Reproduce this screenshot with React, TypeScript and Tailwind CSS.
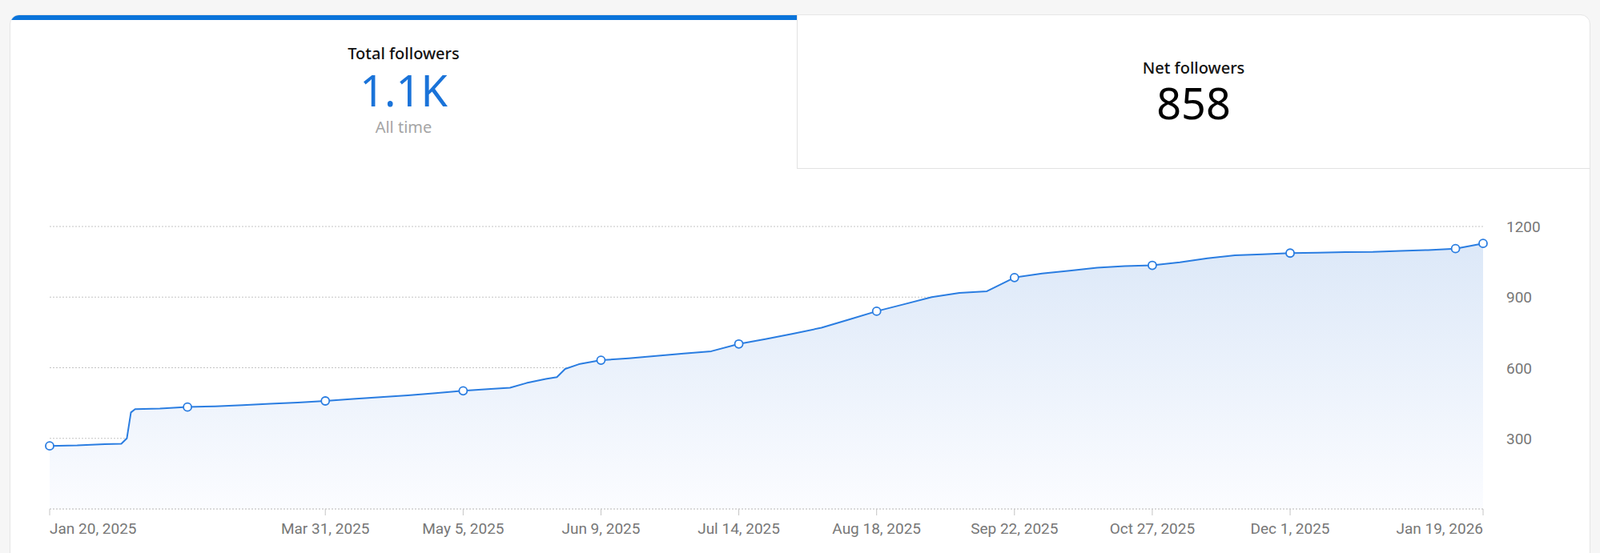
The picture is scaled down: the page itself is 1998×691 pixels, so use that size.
import React from "react";

// [week, followers]
const data: [number, number][] = [
  [0, 268], [1, 270], [2, 275], [2.6, 277], [2.8, 300], [2.95, 410], [3.1, 424], [4, 427],
  [5, 433], [6, 436], [7, 441], [8, 447], [9, 452], [10, 459], [11, 467], [12, 475],
  [13, 483], [14, 492], [15, 502], [16, 510], [16.7, 515], [17.3, 535], [18, 552], [18.4, 560],
  [18.7, 595], [19.2, 615], [20, 632], [21, 640], [22, 650], [23, 660], [24, 670], [25, 701],
  [26, 722], [27, 745], [28, 770], [29, 805], [30, 840], [31, 870], [32, 900], [33, 918],
  [34, 925], [35, 983], [36, 1000], [37, 1012], [38, 1025], [39, 1032], [40, 1035],
  [41, 1048], [42, 1065], [43, 1078], [44, 1082], [45, 1087], [46, 1089], [47, 1091],
  [48, 1092], [49, 1096], [50, 1100], [51, 1106], [52, 1128],
];

const dots = [0, 5, 10, 15, 20, 25, 30, 35, 40, 45, 51, 52];
const ticks: [number, string, "start" | "middle" | "end"][] = [
  [0, "Jan 20, 2025", "start"],
  [10, "Mar 31, 2025", "middle"],
  [15, "May 5, 2025", "middle"],
  [20, "Jun 9, 2025", "middle"],
  [25, "Jul 14, 2025", "middle"],
  [30, "Aug 18, 2025", "middle"],
  [35, "Sep 22, 2025", "middle"],
  [40, "Oct 27, 2025", "middle"],
  [45, "Dec 1, 2025", "middle"],
  [52, "Jan 19, 2026", "end"],
];

const X0 = 49;
const X1 = 1839;
const Y0 = 425;
const Y1200 = 72;
const sx = (w: number) => X0 + ((X1 - X0) * w) / 52;
const sy = (v: number) => Y0 - ((Y0 - Y1200) * v) / 1200;
const valAt = (w: number) => data.find((d) => d[0] === w)![1];

const Chart = () => {
  const line = data.map((d, i) => `${i ? "L" : "M"}${sx(d[0]).toFixed(1)},${sy(d[1]).toFixed(1)}`).join(" ");
  const area = `${line} L${X1},${Y0} L${X0},${Y0} Z`;
  return (
    <svg width="1966" height="481" viewBox="0 0 1966 481" className="block">
      <defs>
        <linearGradient id="fill" x1="0" y1="0" x2="0" y2="1">
          <stop offset="0%" stopColor="#dce8f8" />
          <stop offset="100%" stopColor="#fbfcff" />
        </linearGradient>
      </defs>
      {[1200, 900, 600, 300].map((v) => (
        <g key={v}>
          <line x1={X0} x2={X1} y1={sy(v)} y2={sy(v)} stroke="#c4c4c4" strokeDasharray="2 2" />
          <text x={1868} y={sy(v) + 7} fontSize="19" fill="#777" fontFamily="Roboto, sans-serif">{v}</text>
        </g>
      ))}
      <path d={area} fill="url(#fill)" />
      <line x1={X0} x2={X1} y1={Y0} y2={Y0} stroke="#b5b5b5" strokeDasharray="2 2" />
      <path d={line} fill="none" stroke="#2a7de1" strokeWidth="2" strokeLinejoin="round" />
      {dots.map((w) => (
        <circle key={w} cx={sx(w)} cy={sy(valAt(w))} r="5" fill="#fff" stroke="#2a7de1" strokeWidth="1.8" />
      ))}
      {ticks.map(([w, label, anchor]) => (
        <g key={label}>
          <line x1={sx(w)} x2={sx(w)} y1={Y0} y2={Y0 + 8} stroke="#c4c4c4" />
          <text x={sx(w)} y={456} textAnchor={anchor} fontSize="19" fill="#777" fontFamily="Roboto, sans-serif">
            {label}
          </text>
        </g>
      ))}
    </svg>
  );
};

export default function App() {
  return (
    <div className="min-h-[691px] bg-[#f6f6f6] pt-[18px] px-[12px] font-['Roboto',sans-serif]">
      <div className="bg-white rounded-t-[12px] border border-[#e6e6e6] overflow-hidden">
        <div className="flex">
          <div className="w-[982px] border-t-[6px] border-[#0a74da] h-[192px] flex flex-col items-center pt-[28px]">
            <div className="text-[20px] font-medium text-[#111] leading-[28px]">Total followers</div>
            <div className="text-[54px] leading-[54px] text-[#1a73d9] font-['Liberation_Serif'] mt-[4px]">1.1K</div>
            <div className="text-[20px] text-[#a5a5a5] leading-[28px] mt-[6px]">All time</div>
          </div>
          <div className="flex-1 h-[192px] border-l border-b border-[#e2e2e2] flex flex-col items-center pt-[52px]">
            <div className="text-[20px] font-medium text-[#111] leading-[28px]">Net followers</div>
            <div className="text-[54px] leading-[54px] text-black font-['Liberation_Serif'] mt-[2px]">858</div>
          </div>
        </div>
        <Chart />
      </div>
    </div>
  );
}
